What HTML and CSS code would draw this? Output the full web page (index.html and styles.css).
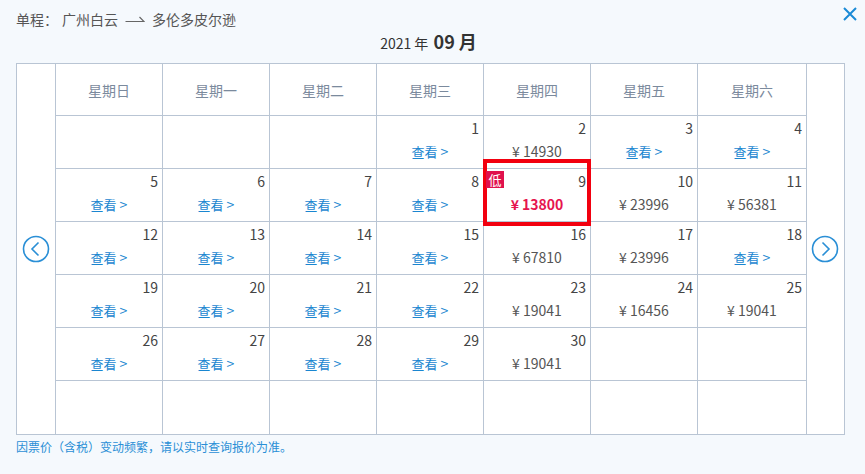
FILE: index.html
```html
<!DOCTYPE html>
<html lang="zh-CN">
<head>
<meta charset="utf-8">
<title>日历</title>
<link rel="stylesheet" href="styles.css">
</head>
<body>
<div class="page">
  <div class="topbar">
    <div class="route">
      <span class="label">单程：</span>
      <span class="city">广州白云</span>
      <svg class="harpoon" width="20" height="10" viewBox="0 0 20 10"><path d="M0.5 7.5 H19 L14.5 3" fill="none" stroke="#666" stroke-width="1.2"/></svg>
      <span class="city">多伦多皮尔逊</span>
    </div>
    <button class="close" type="button" aria-label="关闭">
      <svg width="14" height="14" viewBox="0 0 14 14"><path d="M1 1 L13 13 M13 1 L1 13" stroke="#1a8ad6" stroke-width="2" fill="none"/></svg>
    </button>
  </div>
  <div class="month">2021 年 <b>09 月</b></div>
  <div class="cal">
    <div class="nav">
      <svg width="28" height="28" viewBox="0 0 28 28"><circle cx="14" cy="14" r="12.5" fill="none" stroke="#2a8fd6" stroke-width="1.6"/><path d="M16.5 7.5 L10 14 L16.5 20.5" fill="none" stroke="#2a8fd6" stroke-width="1.6"/></svg>
    </div>
    <div class="grid">
      <div class="head">星期日</div>
      <div class="head">星期一</div>
      <div class="head">星期二</div>
      <div class="head">星期三</div>
      <div class="head">星期四</div>
      <div class="head">星期五</div>
      <div class="head last">星期六</div>

      <div class="cell"></div>
      <div class="cell"></div>
      <div class="cell"></div>
      <div class="cell"><div class="num">1</div><a class="view">查看<span class="gt">&gt;</span></a></div>
      <div class="cell"><div class="num">2</div><div class="price">¥ 14930</div></div>
      <div class="cell"><div class="num">3</div><a class="view">查看<span class="gt">&gt;</span></a></div>
      <div class="cell last"><div class="num">4</div><a class="view">查看<span class="gt">&gt;</span></a></div>

      <div class="cell"><div class="num">5</div><a class="view">查看<span class="gt">&gt;</span></a></div>
      <div class="cell"><div class="num">6</div><a class="view">查看<span class="gt">&gt;</span></a></div>
      <div class="cell"><div class="num">7</div><a class="view">查看<span class="gt">&gt;</span></a></div>
      <div class="cell"><div class="num">8</div><a class="view">查看<span class="gt">&gt;</span></a></div>
      <div class="cell lowest"><span class="badge">低</span><div class="num">9</div><div class="price low">¥ 13800</div><span class="ring"></span></div>
      <div class="cell"><div class="num">10</div><div class="price">¥ 23996</div></div>
      <div class="cell last"><div class="num">11</div><div class="price">¥ 56381</div></div>

      <div class="cell"><div class="num">12</div><a class="view">查看<span class="gt">&gt;</span></a></div>
      <div class="cell"><div class="num">13</div><a class="view">查看<span class="gt">&gt;</span></a></div>
      <div class="cell"><div class="num">14</div><a class="view">查看<span class="gt">&gt;</span></a></div>
      <div class="cell"><div class="num">15</div><a class="view">查看<span class="gt">&gt;</span></a></div>
      <div class="cell"><div class="num">16</div><div class="price">¥ 67810</div></div>
      <div class="cell"><div class="num">17</div><div class="price">¥ 23996</div></div>
      <div class="cell last"><div class="num">18</div><a class="view">查看<span class="gt">&gt;</span></a></div>

      <div class="cell"><div class="num">19</div><a class="view">查看<span class="gt">&gt;</span></a></div>
      <div class="cell"><div class="num">20</div><a class="view">查看<span class="gt">&gt;</span></a></div>
      <div class="cell"><div class="num">21</div><a class="view">查看<span class="gt">&gt;</span></a></div>
      <div class="cell"><div class="num">22</div><a class="view">查看<span class="gt">&gt;</span></a></div>
      <div class="cell"><div class="num">23</div><div class="price">¥ 19041</div></div>
      <div class="cell"><div class="num">24</div><div class="price">¥ 16456</div></div>
      <div class="cell last"><div class="num">25</div><div class="price">¥ 19041</div></div>

      <div class="cell"><div class="num">26</div><a class="view">查看<span class="gt">&gt;</span></a></div>
      <div class="cell"><div class="num">27</div><a class="view">查看<span class="gt">&gt;</span></a></div>
      <div class="cell"><div class="num">28</div><a class="view">查看<span class="gt">&gt;</span></a></div>
      <div class="cell"><div class="num">29</div><a class="view">查看<span class="gt">&gt;</span></a></div>
      <div class="cell"><div class="num">30</div><div class="price">¥ 19041</div></div>
      <div class="cell"></div>
      <div class="cell last"></div>

      <div class="cell bottom"></div>
      <div class="cell bottom"></div>
      <div class="cell bottom"></div>
      <div class="cell bottom"></div>
      <div class="cell bottom"></div>
      <div class="cell bottom"></div>
      <div class="cell bottom last"></div>
    </div>
    <div class="nav next">
      <svg width="28" height="28" viewBox="0 0 28 28"><circle cx="14" cy="14" r="12.5" fill="none" stroke="#2a8fd6" stroke-width="1.6"/><path d="M11.5 7.5 L18 14 L11.5 20.5" fill="none" stroke="#2a8fd6" stroke-width="1.6"/></svg>
    </div>
  </div>
  <p class="note">因票价（含税）变动频繁，请以实时查询报价为准。</p>
</div>
</body>
</html>
```

FILE: styles.css
```css
* { box-sizing: border-box; }
html, body { margin: 0; padding: 0; }
body {
  background: #f5f9fd;
  font-family: "Noto Sans CJK SC", "Noto Sans", sans-serif;
  color: #444;
  width: 865px;
  height: 474px;
  overflow: hidden;
}
.page { width: 865px; }
.topbar {
  display: flex;
  justify-content: space-between;
  align-items: flex-start;
  height: 30px;
  padding: 10px 8px 0 16px;
}
.route {
  display: flex;
  align-items: center;
  font-size: 14px;
  line-height: 18px;
  color: #555;
}
.label { margin-right: 4px; }
.harpoon { margin: 0 7px; }
.close {
  border: 0;
  background: none;
  padding: 0;
  margin-top: -3px;
  width: 14px;
  height: 14px;
  display: flex;
  cursor: pointer;
}
.month {
  height: 22px;
  line-height: 22px;
  text-align: center;
  font-size: 14px;
  color: #333;
  margin: 0 0 11px;
  padding-right: 8px;
}
.month b { font-size: 18px; font-weight: 700; margin-left: 2px; }
.cal {
  display: flex;
  margin: 0 20px 0 16px;
  border: 1px solid #b9c5d4;
  background: #fff;
}
.nav {
  width: 38px;
  display: flex;
  align-items: center;
  justify-content: center;
}
.nav.next { width: 37px; padding-right: 1px; }
.grid {
  display: grid;
  grid-template-columns: repeat(6, 107px) 108px;
  grid-template-rows: 52px repeat(6, 53px);
  border-left: 1px solid #b9c5d4;
  border-right: 1px solid #b9c5d4;
}
.head {
  display: flex;
  align-items: center;
  justify-content: center;
  font-size: 14px;
  color: #7b8a9d;
  border-right: 1px solid #b9c5d4;
  border-bottom: 1px solid #b9c5d4;
}
.cell {
  position: relative;
  border-right: 1px solid #b9c5d4;
  border-bottom: 1px solid #b9c5d4;
  padding: 3px 4px 0;
  text-align: center;
}
.head.last, .cell.last { border-right: 0; }
.cell.bottom { border-bottom: 0; }
.num {
  text-align: right;
  font-size: 14px;
  line-height: 18px;
  color: #444;
}
.view {
  display: block;
  margin-top: 5px;
  line-height: 18px;
  font-size: 13px;
  color: #1a86d0;
  text-decoration: none;
  cursor: pointer;
}
.gt { margin-left: 3px; font-size: 14px; }
.price {
  margin-top: 5px;
  line-height: 18px;
  font-size: 14px;
  color: #555;
}
.price.low {
  color: #e6154f;
  font-weight: 700;
}
.badge {
  position: absolute;
  left: 2px;
  top: 2px;
  width: 18px;
  height: 17px;
  background: #e0114d;
  color: #fff;
  font-size: 13px;
  line-height: 17px;
  text-align: center;
  z-index: 2;
}
.ring {
  position: absolute;
  left: -1px;
  top: -10px;
  width: 108px;
  height: 67px;
  border: 4px solid #f2000f;
  pointer-events: none;
  z-index: 1;
}
.note {
  margin: 4px 0 0 16px;
  font-size: 12px;
  line-height: 16px;
  color: #2a8fd6;
}
```
